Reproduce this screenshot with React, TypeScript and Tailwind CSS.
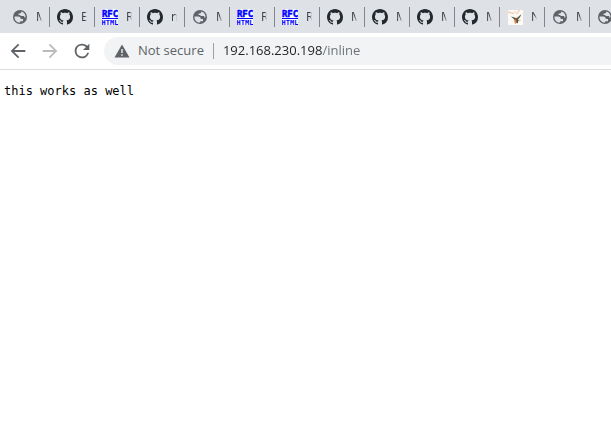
type IconKind = "globe" | "github" | "rfc" | "bird";

const tabs: { icon: IconKind; title: string }[] = [
  { icon: "globe", title: "M" },
  { icon: "github", title: "E" },
  { icon: "rfc", title: "R" },
  { icon: "github", title: "n" },
  { icon: "globe", title: "M" },
  { icon: "rfc", title: "R" },
  { icon: "rfc", title: "R" },
  { icon: "github", title: "M" },
  { icon: "github", title: "M" },
  { icon: "github", title: "M" },
  { icon: "github", title: "M" },
  { icon: "bird", title: "N" },
  { icon: "globe", title: "M" },
  { icon: "globe", title: "M" },
];

function Favicon({ kind }: { kind: IconKind }) {
  if (kind === "github") {
    return (
      <svg viewBox="0 0 16 16" className="size-4 shrink-0 fill-[#24292e]" aria-hidden="true">
        <path d="M8 0C3.58 0 0 3.58 0 8c0 3.54 2.29 6.53 5.47 7.59.4.07.55-.17.55-.38 0-.19-.01-.82-.01-1.49-2.01.37-2.53-.49-2.69-.94-.09-.23-.48-.94-.82-1.13-.28-.15-.68-.52-.01-.53.63-.01 1.08.58 1.23.82.72 1.21 1.87.87 2.33.66.07-.52.28-.87.51-1.07-1.78-.2-3.64-.89-3.64-3.95 0-.87.31-1.59.82-2.15-.08-.2-.36-1.02.08-2.12 0 0 .67-.21 2.2.82.64-.18 1.32-.27 2-.27s1.36.09 2 .27c1.53-1.04 2.2-.82 2.2-.82.44 1.1.16 1.92.08 2.12.51.56.82 1.27.82 2.15 0 3.07-1.87 3.75-3.65 3.95.29.25.54.73.54 1.48 0 1.07-.01 1.93-.01 2.2 0 .21.15.46.55.38A8.01 8.01 0 0 0 16 8c0-4.42-3.58-8-8-8z" />
      </svg>
    );
  }
  if (kind === "rfc") {
    return (
      <svg viewBox="0 0 16 16" className="size-4 shrink-0" aria-hidden="true">
        <path fill="#ffffff" d="M0 0h16v16H0z" />
        <g fill="#0000ff" className="font-['DejaVu_Sans_Mono',monospace] font-bold" textAnchor="middle">
          <text x="8" y="8" fontSize="9" stroke="#0000ff" strokeWidth="0.5">
            RFC
          </text>
          <path d="M0 9h16v1H0z" />
          <text x="8" y="16" fontSize="7">
            HTML
          </text>
        </g>
      </svg>
    );
  }
  if (kind === "bird") {
    return (
      <svg viewBox="0 0 16 16" className="size-4 shrink-0" aria-hidden="true">
        <path fill="#fdfaf6" d="M1 1h15v15H1z" />
        <path fill="none" stroke="#f0cba8" d="M2 4.500V2m0 1.500h2V5m1-2v1.500h2M8 2v2m1 .5 2-.5V2l2-.5" />
        <path fill="#8c8268" d="M14.500 5 13 8.500l-2.500 2.300 4 .2-4.500 1L6.500 9.500l4-1z" />
        <path fill="#5a5640" d="m4 7.500 3 .7 2.500 1.600L14 5.500l-3.500 5.800-2.500.4-1.500-2z" />
        <path fill="#d9854a" d="m7 10 2 1 1.500 1-.8 1.800L8 15l-.5-2z" />
        <path fill="#47422f" d="m9.500 11 2 .5-1 3-1-1z" />
      </svg>
    );
  }
  return (
    <svg viewBox="0 0 16 16" className="size-4 shrink-0" aria-hidden="true">
      <circle cx="8" cy="8" r="7" fill="#5f6368" />
      <path
        fill="#dee1e6"
        d="M2.500 7.500H6c1.800 0 2.800 1 2.800 2.600H11v2.200H8.200v1.300C5 13.900 2.300 11.200 2.500 7.500zM9.300 2.600c.2 1.500-.8 2-2.700 2V6h1.200c.6 0 .8.4.8 1.100h2.700c.9 0 1.100.7 1.100 1.400h1.100c.2-3-1.500-5.200-4.200-5.900z"
      />
    </svg>
  );
}

const navIcons = {
  Back: "M20 11H7.830l5.590-5.590L12 4l-8 8 8 8 1.410-1.410L7.830 13H20v-2z",
  Forward: "M12 4l-1.410 1.410L16.170 11H4v2h12.170l-5.580 5.590L12 20l8-8-8-8z",
  Reload:
    "M17.650 6.350A7.958 7.958 0 0 0 12 4a8 8 0 1 0 7.730 10h-2.080A6 6 0 1 1 12 6c1.660 0 3.140.690 4.220 1.780L13 11h7V4l-2.350 2.350z",
};

function NavButton({ name, muted }: { name: keyof typeof navIcons; muted?: boolean }) {
  return (
    <button type="button" aria-label={name} disabled={muted} className="flex size-7 items-center justify-center">
      <svg viewBox="0 0 24 24" className={muted ? "size-[22px] fill-[#babcbe]" : "size-[22px] fill-[#5f6368]"}>
        <path d={navIcons[name]} />
      </svg>
    </button>
  );
}

export default function App() {
  return (
    <div className="min-h-screen overflow-hidden bg-white font-['Open_Sans','Noto_Sans',sans-serif]">
      <div role="tablist" aria-label="Open tabs" className="flex h-[33px] items-center overflow-hidden bg-[#dee1e6] pl-[5px]">
        {tabs.map((tab, i) => (
          <button
            key={i}
            type="button"
            role="tab"
            className="flex h-5 w-[45px] shrink-0 items-center border-r border-[#80868b] pl-[7px] text-left"
          >
            <Favicon kind={tab.icon} />
            <span className="ml-2 w-[6px] overflow-hidden mask-r-from-60% text-xs text-[#3c4043]">{tab.title}</span>
          </button>
        ))}
      </div>

      <header className="flex items-center gap-1 border-b border-[#dadce0] py-1 pl-1">
        <NavButton name="Back" />
        <NavButton name="Forward" muted />
        <NavButton name="Reload" />
        <div className="ml-1 flex h-7 min-w-0 grow items-center rounded-l-full bg-[#f1f3f4] pl-[10px] text-[13px]">
          <button type="button" className="flex shrink-0 items-center gap-2 text-[#5f6368]">
            <svg viewBox="0 0 16 16" className="size-4 fill-[#5f6368]" aria-hidden="true">
              <path fillRule="evenodd" d="M8 1.500 15.500 14.500H.5zM7.300 6v4h1.400V6zm0 5.200v1.500h1.400v-1.500z" />
            </svg>
            Not secure
          </button>
          <span className="ml-[9px] h-4 w-px shrink-0 bg-[#9aa0a6]" />
          <input
            type="text"
            aria-label="Address"
            defaultValue="192.168.230.198/inline"
            className="ml-[9px] min-w-0 grow bg-linear-to-r from-[#202124] from-[100px] to-[#6b6f74] to-[100px] bg-clip-text text-transparent caret-[#202124] outline-none"
          />
        </div>
      </header>

      <main className="px-1 py-3">
        <pre className="font-['DejaVu_Sans_Mono',monospace] text-xs leading-[18px] text-black">this works as well</pre>
      </main>
    </div>
  );
}
